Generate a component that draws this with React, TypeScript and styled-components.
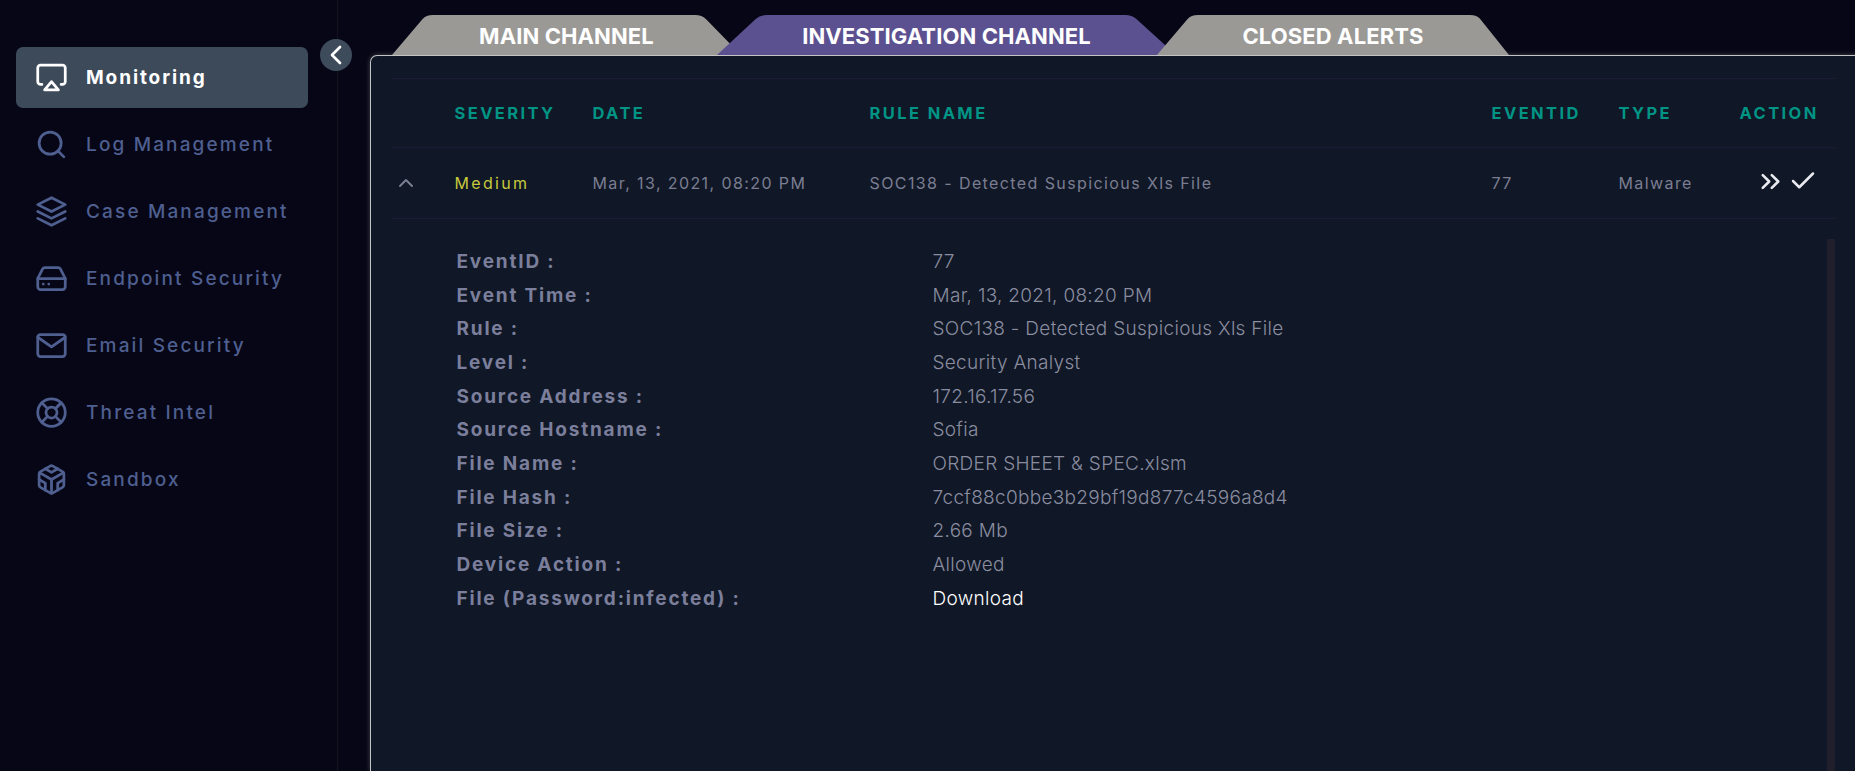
import React from "react";
import styled, { createGlobalStyle } from "styled-components";
import {
  FiAirplay, FiSearch, FiLayers, FiHardDrive, FiMail, FiLifeBuoy, FiCodesandbox,
  FiChevronLeft, FiChevronUp, FiChevronsRight, FiCheck,
} from "react-icons/fi";

const Global = createGlobalStyle`
  html, body { margin: 0; height: 771px; overflow: hidden; background: #060616; }
  * { box-sizing: border-box; }
  body { font-family: Inter, "Liberation Sans", sans-serif; }
`;

const Page = styled.div`
  display: flex;
  width: 1855px;
  height: 771px;
  overflow: hidden;
  background: #060616;
`;

const Sidebar = styled.aside`
  position: relative;
  flex: 0 0 338px;
  height: 100%;
  padding: 47px 29px 0 16px;
  border-right: 1px solid #14141f;
  display: flex;
  flex-direction: column;
  gap: 6px;
`;

const Collapse = styled.button`
  position: absolute;
  top: 39px;
  left: 320px;
  width: 32px;
  height: 32px;
  border: 0;
  padding: 0;
  border-radius: 50%;
  background: #3d4b5b;
  color: #fff;
  display: flex;
  align-items: center;
  justify-content: center;
  font-size: 32px;
`;

const NavItem = styled.div<{ $active?: boolean }>`
  height: 61px;
  border-radius: 7px;
  padding-left: 19px;
  display: flex;
  align-items: center;
  gap: 18px;
  font-size: 19px;
  letter-spacing: ${(p) => (p.$active ? 1.9 : 2.15)}px;
  font-weight: ${(p) => (p.$active ? 700 : 500)};
  color: ${(p) => (p.$active ? "#ffffff" : "#4e5f90")};
  background: ${(p) => (p.$active ? "#3c4a5a" : "transparent")};
  svg { font-size: 33px; flex: none; stroke-width: 2; }
`;

const Main = styled.main`
  flex: 1;
  min-width: 0;
  padding: 15px 0 0 32px;
  display: flex;
  flex-direction: column;
`;

const Tabs = styled.div`
  display: flex;
  height: 40px;
  padding-left: 22px;
`;

const Tab = styled.div<{ $w: number; $l: number; $r: number; $overlap: number; $purple?: boolean }>`
  position: relative;
  flex: none;
  width: ${(p) => p.$w}px;
  height: 40px;
  margin-right: ${(p) => -p.$overlap}px;
  padding-top: 2px;
  background: ${(p) => (p.$purple ? "#5c5190" : "#9a9996")};
  clip-path: ${(p) =>
    `path("M0 40 L${p.$l * 0.9} 4 Q${p.$l} 0 ${p.$l + 7} 0 L${p.$w - p.$r - 7} 0 Q${p.$w - p.$r} 0 ${p.$w - p.$r * 0.9} 4 L${p.$w} 40 Z")`};
  color: #fff;
  font-size: 22px;
  letter-spacing: 0.1px;
  font-weight: 700;
  display: flex;
  align-items: center;
  justify-content: center;
  white-space: nowrap;
`;

const Panel = styled.section`
  flex: 1;
  margin-right: -3px;
  border: 1.5px solid #c4c4c4;
  border-bottom: 0;
  border-radius: 7px 0 0 0;
  background: #101726;
  box-shadow: 0 0 5px rgba(255, 255, 255, 0.25);
  padding: 21.5px 22.5px 0 20.5px;
  display: flex;
  flex-direction: column;
  min-height: 0;
`;

const Row = styled.div<{ $h: number }>`
  display: grid;
  grid-template-columns: 63px 138px 277px 622px 127px 121px 1fr;
  align-items: center;
  height: ${(p) => p.$h}px;
  padding-top: 1px;
  border-top: 1px solid #1c1c38;
`;

const Head = styled.div`
  font-size: 16.5px;
  font-weight: 700;
  letter-spacing: 2.4px;
  color: #009485;
  white-space: nowrap;
`;

const Cell = styled.div<{ $yellow?: boolean }>`
  font-size: 16px;
  letter-spacing: ${(p) => (p.$yellow ? 2.3 : 1.4)}px;
  color: ${(p) => (p.$yellow ? "#c7ca3e" : "#7b7e92")};
  white-space: nowrap;
`;

const Expander = styled.div`
  display: flex;
  padding-left: 2px;
  color: #7b7e92;
  font-size: 24px;
`;

const Actions = styled.div`
  display: flex;
  align-items: center;
  padding-left: 15px;
  margin-top: -4px;
  gap: 2px;
  color: #e8eaf0;
  svg:first-child { font-size: 31px; }
  svg:last-child { font-size: 30px; }
`;

const Details = styled.div`
  flex: 1;
  min-height: 0;
  border-top: 1px solid #1c1c38;
  display: flex;
  padding-top: 20px;
`;

const Fields = styled.div`
  flex: 1;
  padding: 6px 0 0 65px;
`;

const Field = styled.div`
  display: grid;
  grid-template-columns: 475px 1fr;
  align-items: center;
  height: 33.7px;
`;

const Label = styled.div`
  font-size: 19px;
  font-weight: 700;
  letter-spacing: 1.8px;
  color: #7b7f9c;
`;

const Value = styled.div<{ $link?: boolean }>`
  font-size: 19px;
  letter-spacing: 0.3px;
  padding-left: 1px;
  color: ${(p) => (p.$link ? "#ffffff" : "#8a8da0")};
  font-weight: 300;
`;

const ScrollTrack = styled.div`
  flex: 0 0 8px;
  background: #211f2b;
  border-radius: 1px;
`;

const nav = [
  { label: "Monitoring", icon: <FiAirplay />, active: true },
  { label: "Log Management", icon: <FiSearch /> },
  { label: "Case Management", icon: <FiLayers /> },
  { label: "Endpoint Security", icon: <FiHardDrive /> },
  { label: "Email Security", icon: <FiMail /> },
  { label: "Threat Intel", icon: <FiLifeBuoy /> },
  { label: "Sandbox", icon: <FiCodesandbox /> },
];

const fields: [string, string][] = [
  ["EventID :", "77"],
  ["Event Time :", "Mar, 13, 2021, 08:20 PM"],
  ["Rule :", "SOC138 - Detected Suspicious Xls File"],
  ["Level :", "Security Analyst"],
  ["Source Address :", "172.16.17.56"],
  ["Source Hostname :", "Sofia"],
  ["File Name :", "ORDER SHEET & SPEC.xlsm"],
  ["File Hash :", "7ccf88c0bbe3b29bf19d877c4596a8d4"],
  ["File Size :", "2.66 Mb"],
  ["Device Action :", "Allowed"],
];

export default function App() {
  return (
    <Page>
      <Global />
      <Sidebar>
        {nav.map((n) => (
          <NavItem key={n.label} $active={n.active}>
            {n.icon}
            <span>{n.label}</span>
          </NavItem>
        ))}
        <Collapse aria-label="Collapse"><FiChevronLeft /></Collapse>
      </Sidebar>
      <Main>
        <Tabs>
          <Tab $w={349} $l={34} $r={39} $overlap={24}>MAIN CHANNEL</Tab>
          <Tab $w={459} $l={43} $r={44} $overlap={19} $purple>INVESTIGATION CHANNEL</Tab>
          <Tab $w={352} $l={34} $r={32} $overlap={0}>CLOSED ALERTS</Tab>
        </Tabs>
        <Panel>
          <Row $h={69}>
            <span />
            <Head>SEVERITY</Head>
            <Head>DATE</Head>
            <Head>RULE NAME</Head>
            <Head>EVENTID</Head>
            <Head>TYPE</Head>
            <Head>ACTION</Head>
          </Row>
          <Row $h={71}>
            <Expander><FiChevronUp /></Expander>
            <Cell $yellow>Medium</Cell>
            <Cell>Mar, 13, 2021, 08:20 PM</Cell>
            <Cell>SOC138 - Detected Suspicious Xls File</Cell>
            <Cell>77</Cell>
            <Cell>Malware</Cell>
            <Actions><FiChevronsRight /><FiCheck /></Actions>
          </Row>
          <Details>
            <Fields>
              {fields.map(([k, v]) => (
                <Field key={k}>
                  <Label>{k}</Label>
                  <Value>{v}</Value>
                </Field>
              ))}
              <Field>
                <Label>File (Password:infected) :</Label>
                <Value $link>Download</Value>
              </Field>
            </Fields>
            <ScrollTrack />
          </Details>
        </Panel>
      </Main>
    </Page>
  );
}
